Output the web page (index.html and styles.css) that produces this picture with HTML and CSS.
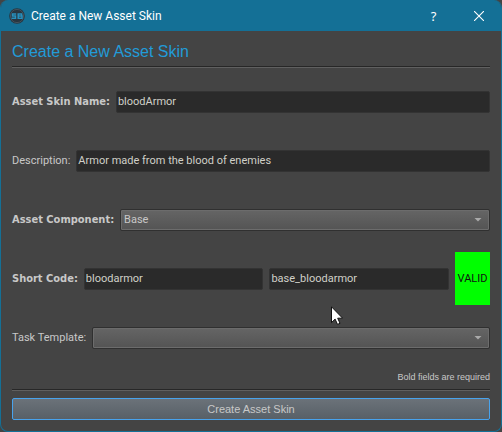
FILE: index.html
```html
<!DOCTYPE html>
<html lang="en">
<head>
<meta charset="utf-8">
<title>Create a New Asset Skin</title>
<link rel="stylesheet" href="styles.css">
</head>
<body>
<div class="window">
  <header class="titlebar">
    <svg class="app-icon" viewBox="0 0 16 16" aria-hidden="true">
      <circle cx="8" cy="8" r="7.8" fill="#283640"/>
      <circle cx="8" cy="8" r="6.6" fill="none" stroke="#4b5963" stroke-width=".8"/>
      <path d="M7.2 6H3.5V8H6.5V10.2H2.5" fill="none" stroke="#2790bd" stroke-width="1.5"/>
      <path d="M9.2 6H12.6V8H9.5H13V10.2H9.2V5.3" fill="none" stroke="#2790bd" stroke-width="1.5"/>
    </svg>
    <span class="caption">Create a New Asset Skin</span>
    <button class="caption-button" type="button" aria-label="Help">?</button>
    <button class="caption-button" type="button" aria-label="Close">
      <svg class="close-icon" viewBox="0 0 10 10" aria-hidden="true"><path d="M0 0L10 10M10 0L0 10" stroke="#fff" stroke-width="1.1"/></svg>
    </button>
  </header>
  <form class="dialog">
    <h1 class="heading">Create a New Asset Skin</h1>
    <div class="fields">
      <div class="row">
        <label class="label required" for="name">Asset Skin Name:</label>
        <input class="input" id="name" type="text" value="bloodArmor">
      </div>
      <div class="row">
        <label class="label" for="description">Description:</label>
        <input class="input" id="description" type="text" value="Armor made from the blood of enemies">
      </div>
      <div class="row">
        <label class="label required" for="component">Asset Component:</label>
        <div class="combo">
          <select class="select" id="component"><option>Base</option></select>
        </div>
      </div>
      <div class="row">
        <label class="label required" for="code">Short Code:</label>
        <input class="input" id="code" type="text" value="bloodarmor">
        <input class="input" type="text" aria-label="Full code" value="base_bloodarmor">
        <output class="status">VALID</output>
      </div>
      <div class="row">
        <label class="label" for="template">Task Template:</label>
        <div class="combo">
          <select class="select" id="template"><option></option></select>
        </div>
      </div>
    </div>
    <p class="note">Bold fields are required</p>
    <button class="submit" type="button">Create Asset Skin</button>
  </form>
  <svg class="pointer" viewBox="0 0 12 19" aria-hidden="true">
    <path d="M.5 .8V16.6L4.1 13.1L6.5 18.4L9 17.3L6.7 12.2H11.6Z" fill="#fff" stroke="#111" stroke-width="1"/>
  </svg>
</div>
</body>
</html>
```
FILE: styles.css
```css
* {
  box-sizing: border-box;
}

body {
  margin: 0;
  background: #444;
  color: #c8c8c8;
  font: 11px/14px Roboto, sans-serif;
}

.window {
  position: relative;
  display: flex;
  flex-direction: column;
  min-height: 100vh;
  overflow: hidden;
  border: 1px solid #147096;
  border-top: 0;
  border-radius: 8px;
  background: #444;
}

.titlebar {
  display: flex;
  align-items: center;
  height: 31px;
  padding-left: 8px;
  background: #147096;
  color: #fff;
}

.app-icon {
  width: 16px;
  height: 16px;
  margin-right: 6px;
}

.caption {
  flex: 1;
  font: 12px/16px Roboto, sans-serif;
}

.caption-button {
  display: flex;
  align-items: center;
  justify-content: center;
  width: 45px;
  height: 31px;
  padding: 0;
  border: 0;
  background: none;
  color: inherit;
  font: 13px/16px "Noto Sans", sans-serif;
}

.close-icon {
  width: 10px;
  height: 10px;
}

.dialog {
  display: flex;
  flex: 1;
  flex-direction: column;
  padding: 11px;
}

.heading {
  margin: 0 0 8px;
  padding-bottom: 4px;
  border-bottom: 1px solid #272727;
  box-shadow: 0 1px #606060;
  color: #229bd8;
  font: 16px/20px "Liberation Sans", sans-serif;
}

.fields {
  display: grid;
  gap: 6px;
}

.row {
  display: flex;
  align-items: center;
  gap: 6px;
  height: 53px;
}

.label {
  white-space: nowrap;
}

.required {
  font-family: "DejaVu Sans Condensed", sans-serif;
  font-weight: bold;
}

.input {
  flex: 1;
  min-width: 0;
  height: 22px;
  padding: 0 1px;
  border: 1px solid #333;
  border-radius: 2px;
  background: #2a2a2a;
  color: #d0d0c8;
  font: inherit;
}

.combo {
  position: relative;
  flex: 1;
}

.combo::after {
  content: "";
  position: absolute;
  top: 9px;
  right: 8px;
  width: 8px;
  height: 4px;
  background: #aaa;
  clip-path: polygon(0 0, 100% 0, 50% 100%);
  pointer-events: none;
}

.select {
  display: block;
  width: 100%;
  height: 22px;
  padding: 0 3px;
  border: 1px solid #303030;
  border-radius: 2px;
  appearance: none;
  background: linear-gradient(#656565, #545454);
  box-shadow: inset 0 0 0 1px #6c6c6c;
  color: #c8c8c8;
  font: inherit;
}

.status {
  display: flex;
  align-items: center;
  justify-content: center;
  width: 35px;
  height: 53px;
  background: #0f0;
  color: #111;
}

.note {
  margin: 6px 0 5px;
  padding-bottom: 5px;
  border-bottom: 1px solid #272727;
  box-shadow: 0 1px #606060;
  font: 9px/14px "Liberation Sans", sans-serif;
  text-align: right;
}

.submit {
  height: 22px;
  margin-top: 3px;
  padding: 0;
  border: 1px solid #48a3ed;
  border-radius: 2px;
  background: linear-gradient(#6b7279, #586067);
  color: #c8c8c8;
  font: 11px/14px "Liberation Sans", sans-serif;
}

.pointer {
  position: absolute;
  top: 306px;
  left: 330px;
  width: 12px;
  height: 19px;
}
```
